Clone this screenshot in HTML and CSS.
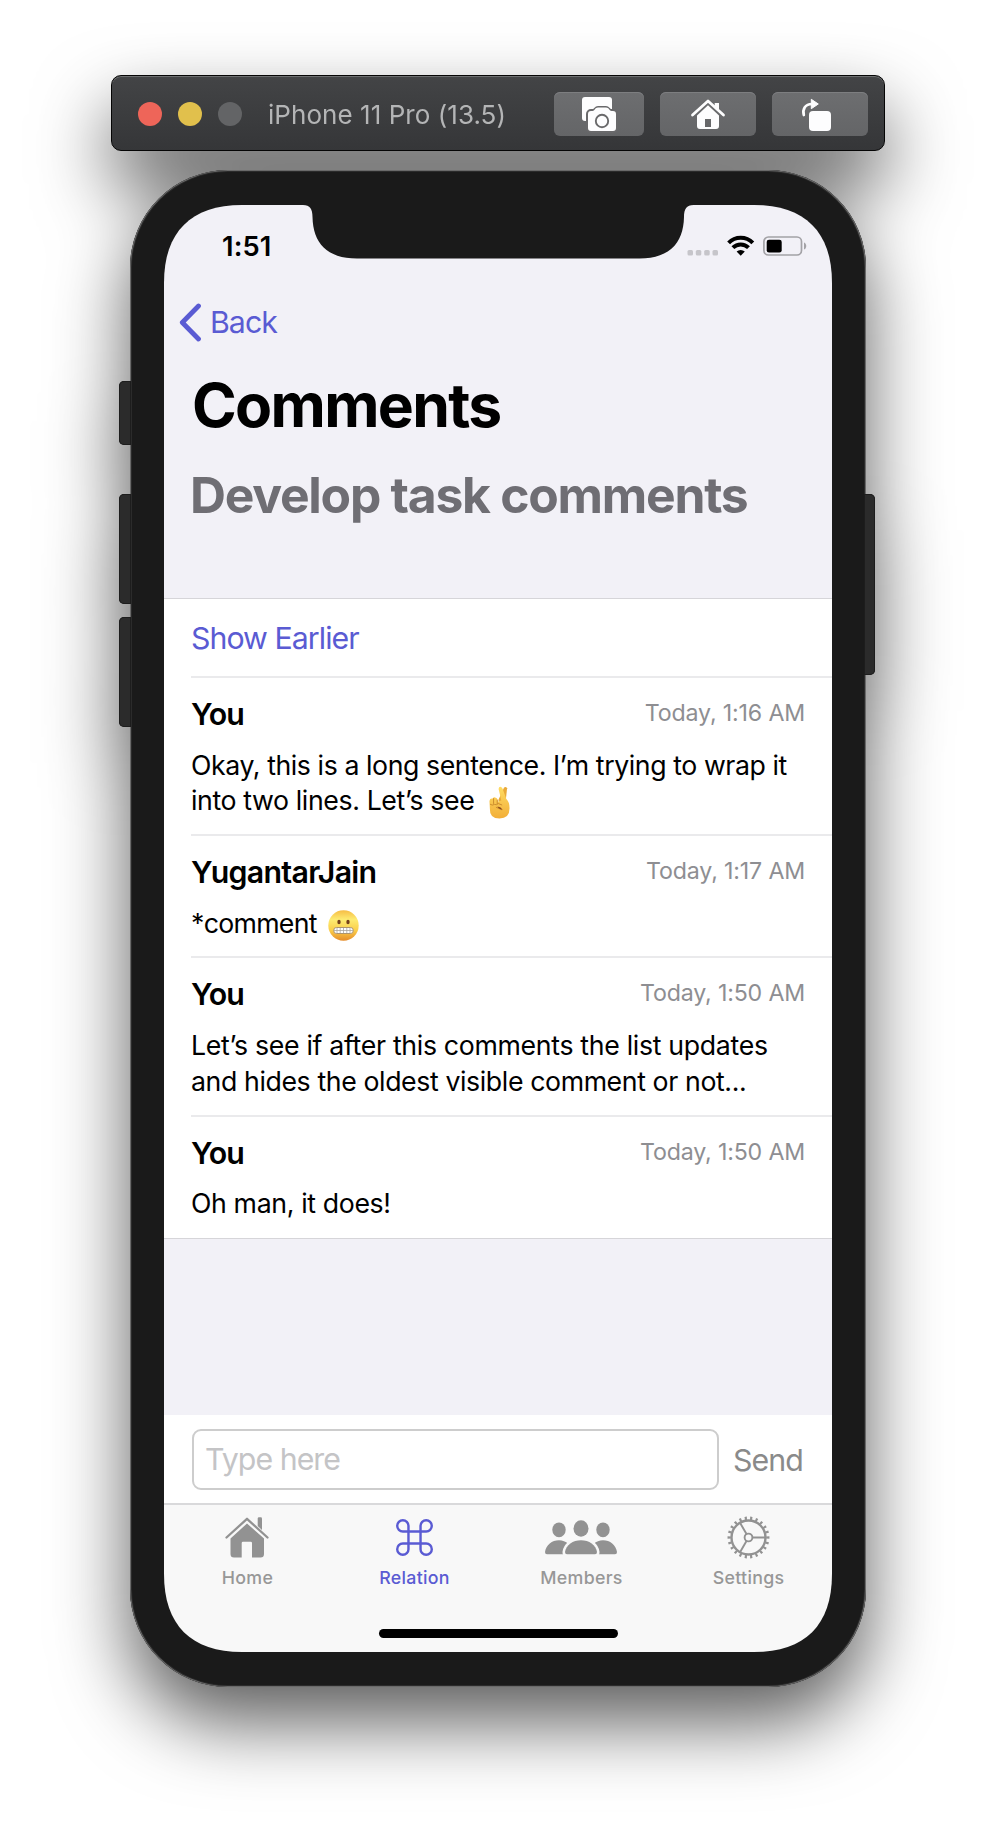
FILE: index.html
```html
<!DOCTYPE html>
<html lang="en">
<head>
<meta charset="utf-8">
<title>iPhone 11 Pro (13.5)</title>
<link rel="stylesheet" href="styles.css">
</head>
<body>
<div class="simulator">
  <header class="toolbar">
    <span class="light red"></span><span class="light yellow"></span><span class="light gray"></span>
    <span class="title"><span class="t-title">iPhone 11 Pro (13.5)</span></span>
    <div class="tools">
      <span class="tool narrow"><svg width="90" height="44" viewBox="0 0 90 44">
        <rect x="28" y="5" width="30" height="24" rx="3" fill="#fdfdfe"/>
        <path d="M37 19h2.500c1.500 0 2.500-3 4.500-3h8c2 0 3 3 4.500 3H59a3 3 0 0 1 3 3v14a3 3 0 0 1-3 3H37a3 3 0 0 1-3-3V22a3 3 0 0 1 3-3z" fill="#69696b" stroke="#69696b" stroke-width="4"/>
        <path d="M37 19h1.500c2 0 2.500-3.500 5.500-3.500h8c3 0 3.500 3.500 5.500 3.500H59a3 3 0 0 1 3 3v14a3 3 0 0 1-3 3H37a3 3 0 0 1-3-3V22a3 3 0 0 1 3-3z" fill="#fdfdfe"/>
        <circle cx="48" cy="29" r="6.200" fill="none" stroke="#69696b" stroke-width="1.900"/></svg></span>
      <span class="tool"><svg width="96" height="44" viewBox="0 0 96 44">
        <path d="M32.500 23 48 9l15.500 14" fill="none" stroke="#fdfdfe" stroke-width="2.800" stroke-linecap="round" stroke-linejoin="round"/>
        <path d="M54.700 11H59v8l-4.300-4z" fill="#fdfdfe"/>
        <path fill-rule="evenodd" d="M48 13.300 59 23.500V34a3 3 0 0 1-3 3H40a3 3 0 0 1-3-3V23.500zM45 27v8h6v-8z" fill="#fdfdfe"/></svg></span>
      <span class="tool"><svg width="96" height="44" viewBox="0 0 96 44">
        <rect x="37" y="19" width="22" height="20" rx="4" fill="#fdfdfe"/>
        <path d="M31.800 23c-1.500-6 1.500-11 8-11" fill="none" stroke="#fdfdfe" stroke-width="2.700" stroke-linecap="round"/>
        <path d="M39.300 7.300v9.400l7-4.700z" fill="#fdfdfe" stroke="#fdfdfe" stroke-linejoin="round"/></svg></span>
    </div>
  </header>

  <div class="phone">
    <i class="key mute"></i><i class="key vol-up"></i><i class="key vol-down"></i><i class="key power"></i>
    <main class="screen">
      <svg class="notch" width="668" height="56" viewBox="0 0 668 56"><path d="M139-1V0C146 0 148.500 4 148.500 12 149 38 163 53.500 193 53.500H475.500C505.500 53.500 519.500 38 520 12 520 4 522.500 0 529.500 0V-1z" fill="#1a1a1a"/></svg>
      <div class="status">
        <span class="t-clock">1:51</span>
        <svg width="121" height="22" viewBox="0 0 121 22">
          <g fill="#c6c5ca"><rect x="0.500" y="15" width="5.500" height="5.500" rx="1.500"/><rect x="8.800" y="15" width="5.500" height="5.500" rx="1.500"/><rect x="17.200" y="15" width="5.500" height="5.500" rx="1.500"/><rect x="25.500" y="15" width="5.500" height="5.500" rx="1.500"/></g>
          <g fill="none" stroke="#000" stroke-width="4"><path d="M41.600 7.800a17 17 0 0 1 24.200 0"/><path d="M45.900 12.700a11 11 0 0 1 15.600 0"/></g>
          <path d="M49.600 16.600a6 6 0 0 1 8.200 0L53.700 20.800z"/>
          <rect x="76.900" y="2" width="37.600" height="18" rx="4.500" fill="none" stroke="#a3a2a6" stroke-width="1.700"/>
          <rect x="79.700" y="4.700" width="15" height="12.800" rx="2.300"/>
          <path d="M117 7.500c3 1 3 6 0 7z" fill="#a3a2a6"/>
        </svg>
      </div>
      <nav class="nav">
        <svg width="23" height="39" viewBox="0 0 23 39"><path d="M19.500 3 3.300 19.500 19.500 36" fill="none" stroke="#5a5bd3" stroke-width="4.800" stroke-linecap="round" stroke-linejoin="round"/></svg>
        <span class="t-back">Back</span>
      </nav>
      <h1><span class="t-h1">Comments</span></h1>
      <h2><span class="t-h2">Develop task comments</span></h2>

      <section class="list">
        <div class="cell earlier"><span class="t-earlier">Show Earlier</span></div>
        <article class="cell">
          <div class="meta"><b class="t-you">You</b><time>Today, 1:16 AM</time></div>
          <p><span class="t-a1">Okay, this is a long sentence. I’m trying to wrap it</span><br><span class="t-a2">into two lines. Let’s see</span><svg class="hand" width="21" height="33" viewBox="0 0 23 34" preserveAspectRatio="none">
            <defs><linearGradient id="skin" x2="0" y2="1"><stop offset="0" stop-color="#ffdc62"/><stop offset="1" stop-color="#f2ae38"/></linearGradient></defs>
            <path d="M10 15 16.500 1.600q2-1.500 3.300.6L18 18z" fill="#e9a938"/>
            <path d="M13.500 15 10.500 3q.3-2.600 2.600-2 1.500.3 1.900 2L19 13.500q3.500 3 3.500 9.500 0 10.500-11 10.500T1 24L.5 15.500q.5-3 3.500-2.500 1.300-2 3.300-1 2 0 2.500 4z" fill="url(#skin)"/>
            <path d="M5 13v5M9 14.500v4M1.500 19q2 1.500 4.500 0 2.500 1 4-1l4 1.500M8 22l6 2.500" fill="none" stroke="#c98a2c" stroke-width="1" stroke-linecap="round"/>
            <path d="M9 21.500q3-1 6 3-3.500 0-6-3z" fill="#87451a"/></svg></p>
        </article>
        <article class="cell">
          <div class="meta"><b class="t-yj">YugantarJain</b><time>Today, 1:17 AM</time></div>
          <p><span class="t-b">*comment</span><svg class="face" width="31" height="31" viewBox="0 0 31 31">
            <defs><linearGradient id="face" x2="0" y2="1"><stop offset="0" stop-color="#f6bd45"/><stop offset=".3" stop-color="#fdeb72"/><stop offset=".65" stop-color="#fbcf4b"/><stop offset="1" stop-color="#e58c2a"/></linearGradient></defs>
            <circle cx="15.500" cy="15.500" r="15.200" fill="url(#face)"/>
            <ellipse cx="11" cy="12" rx="1.700" ry="2.300" fill="#75401b"/><ellipse cx="20" cy="12" rx="1.700" ry="2.300" fill="#75401b"/>
            <rect x="5.800" y="17.500" width="19.400" height="6" rx="2.600" fill="#fff" stroke="#a58b67" stroke-width=".9"/>
            <path d="M6 20.500h19M9 18v5M12.200 18v5M15.500 18v5M18.800 18v5M22 18v5" stroke="#aaa69f" stroke-width=".8"/></svg></p>
        </article>
        <article class="cell">
          <div class="meta"><b class="t-you">You</b><time>Today, 1:50 AM</time></div>
          <p><span class="t-c1">Let’s see if after this comments the list updates</span><br><span class="t-c2">and hides the oldest visible comment or not...</span></p>
        </article>
        <article class="cell">
          <div class="meta"><b class="t-you">You</b><time>Today, 1:50 AM</time></div>
          <p><span class="t-d">Oh man, it does!</span></p>
        </article>
      </section>

      <div class="composer">
        <div class="field"><span class="t-type">Type here</span></div>
        <span class="send"><span class="t-send">Send</span></span>
      </div>
      <footer class="tabs">
        <div class="tab"><div class="icon"><svg width="44" height="41" viewBox="0 0 44 41">
          <path d="M1.500 20.500 22 1.800l20.500 18.700" fill="none" stroke="#929292" stroke-width="2.300" stroke-linecap="round" stroke-linejoin="round"/>
          <path d="M32.700 9V1.500Q32.700.3 34 .3h1.700Q37 .3 37 1.500V13z"/>
          <path d="M22 6.500 39 21.500V37q0 3.500-3.500 3.500H27V26q0-1.300-1.300-1.300H18q-1.300 0-1.300 1.300v14.500H9Q5.500 40.500 5.500 37V21.500z"/></svg></div><span>Home</span></div>
        <div class="tab active"><div class="icon"><svg width="37" height="37" viewBox="0 0 36.800 36.800"><path d="M24.400 6.800a5.600 5.600 0 1 1 5.600 5.600H6.800a5.600 5.600 0 1 1 5.600-5.600V30a5.600 5.600 0 1 1-5.600-5.600H30a5.600 5.600 0 1 1-5.600 5.600z" fill="none" stroke="#5a5bd3" stroke-width="2.400"/></svg></div><span>Relation</span></div>
        <div class="tab"><div class="icon"><svg width="72" height="35" viewBox="0 0 72 35">
          <ellipse cx="14" cy="9.800" rx="6.700" ry="7.400"/><ellipse cx="58" cy="9.800" rx="6.700" ry="7.400"/><ellipse cx="36" cy="8.500" rx="7.500" ry="8.300"/>
          <path d="M0 32C1 25 7 20.300 14 20.300S27 25 28 34.300H2Q0 34.300 0 32zM72 32C71 25 65 20.300 58 20.300S45 25 44 34.300H70Q72 34.300 72 32z"/>
          <path d="M20 32C21 25 28 20.300 36 20.300S51 25 52 32Q52 34.300 50 34.300H22Q20 34.300 20 32z" stroke="#f8f8f8" stroke-width="5"/>
          <path d="M20 32C21 25 28 20.300 36 20.300S51 25 52 32Q52 34.300 50 34.300H22Q20 34.300 20 32z"/></svg></div><span>Members</span></div>
        <div class="tab"><div class="icon"><svg width="43" height="43" viewBox="-21.500 -21.500 43 43"><g fill="none" stroke="#929292">
          <circle r="17" stroke-width="2.400"/><circle r="3.900" stroke-width="1.900"/><circle r="19.300" stroke-width="3.300" pathLength="66" stroke-dasharray="1.200 1.800" stroke-dashoffset=".6"/>
          <path d="M4 0H17M-2 3.500-8.500 14.700M-2-3.500-8.500-14.700" stroke-width="1.900"/></g></svg></div><span>Settings</span></div>
        <i class="indicator"></i>
      </footer>
    </main>
  </div>
</div>
</body>
</html>
```
FILE: styles.css
```css
* { box-sizing: border-box; }
body { margin: 0; width: 996px; height: 1836px; overflow: hidden; background: #fff; font-family: Inter, "Liberation Sans", sans-serif; color: #000; }
svg { display: block; flex: none; }
span, b, time { white-space: nowrap; }
.simulator { height: 1836px; padding-top: 75px; display: flex; flex-direction: column; align-items: center; filter: drop-shadow(0 36px 37px rgba(0, 0, 0, .63)); }

.toolbar { width: 774px; height: 76px; padding: 2px 16px 0 26px; display: flex; align-items: center; gap: 16px; border: 1px solid #050505; border-radius: 10px; background: linear-gradient(#434446, #353638); box-shadow: inset 0 1px #6d6f70; }
.light { width: 24px; height: 24px; border-radius: 50%; }
.red { background: #ee6559; }
.yellow { background: #e1c04c; }
.gray { background: #636466; }
.title { margin-left: 10px; padding-top: 2px; flex: 1; font-size: 26px; line-height: 34px; color: #b4b5b6; }
.tools { display: flex; gap: 16px; }
.tool { width: 96px; height: 44px; border-radius: 6px; background: linear-gradient(#6d6e70, #646567); box-shadow: inset 0 1px #7d7e80; }
.narrow { width: 90px; }

.phone { position: relative; width: 736px; height: 1517px; margin-top: 19px; padding: 35px 34px; border-radius: 98px; background: #1a1a1a; box-shadow: inset 0 0 0 1px #6a6a6a, inset 0 0 0 2px #2b2b2b; }
.key { position: absolute; z-index: 1; left: -11px; width: 12px; border-radius: 5px 0 0 5px; background: #2b2b2b; box-shadow: inset 0 0 0 1px #1d1d1d; }
.mute { top: 211px; height: 64px; }
.vol-up { top: 324px; height: 110px; }
.vol-down { top: 447px; height: 110px; }
.power { top: 324px; height: 181px; left: 734px; width: 11px; border-radius: 0 5px 5px 0; }

.screen { position: relative; width: 668px; height: 1447px; display: flex; flex-direction: column; background: #f2f1f7; clip-path: path("M0 78C0 27 27 0 78 0H590C641 0 668 27 668 78V1369C668 1420 641 1447 590 1447H78C27 1447 0 1420 0 1369Z"); }
.notch { position: absolute; top: 0; left: 0; }
.status { height: 81px; padding: 0 24px 0 58px; display: flex; align-items: center; justify-content: space-between; font-size: 26.700px; font-weight: 600; }
.nav { height: 72px; padding: 0 0 0 15px; display: flex; align-items: center; gap: 8px; font-size: 30.300px; line-height: 73px; color: #5a5bd3; }
h1, h2, p { margin: 0; }
h1 { height: 92px; padding: 1px 0 0 28px; font-size: 60.600px; line-height: 92px; font-weight: 700; }
h2 { height: 148px; padding: 1px 0 0 26px; font-size: 49.800px; line-height: 88px; font-weight: 700; color: #6f6e74; }

.list { background: #fff; border-top: 1px solid #d6d5d9; border-bottom: 1px solid #d6d5d9; }
.cell { margin-left: 27px; padding: 16px 27px 15.200px 0; border-bottom: 2px solid #eaeaec; }
.cell:last-child { border-bottom: 0; padding-bottom: 16px; }
.earlier { height: 79px; padding: 0; font-size: 30.300px; line-height: 78px; color: #5a5bd3; }
.meta { height: 40px; margin-bottom: 13.500px; display: flex; justify-content: space-between; font-size: 30.300px; line-height: 40px; }
.meta b { font-weight: 600; }
time { font-size: 23.200px; line-height: 39.500px; letter-spacing: -.17px; color: #8e8e92; }
p { font-size: 26.700px; line-height: 35.700px; }
p svg { display: inline-block; }
.hand { margin: -8px 0 -8px 15px; vertical-align: -7px; }
.face { margin: -8px 0 -8px 11px; vertical-align: -6px; }
.hand, .face { transform: translateY(-6px); }

.composer { height: 88px; margin-top: auto; padding: 14px 28px 0 28px; display: flex; gap: 14px; background: #fff; font-size: 30.300px; }
.field { width: 527px; height: 61px; padding-left: 11px; border: 2px solid #cdcdcd; border-radius: 9px; line-height: 56px; color: #c4c4c6; }
.send { line-height: 63px; color: #8a8a8a; }
.tabs { position: relative; height: 149px; padding-top: 6px; display: flex; background: #f8f8f8; border-top: 2px solid #d9d9db; }
.tab { width: 167px; display: flex; flex-direction: column; align-items: center; font-size: 17.800px; line-height: 25px; font-weight: 500; letter-spacing: .3px; color: #979797; fill: #929292; }
.tab svg { margin: 0 1px 1px 0; }
.active { color: #5a5bd3; }
.icon { height: 54px; display: flex; align-items: center; }
.indicator { position: absolute; left: 215px; bottom: 14px; width: 239px; height: 9px; border-radius: 5px; background: #000; }

.t-title { letter-spacing: .05px; }
.t-clock { padding-top: 2px; letter-spacing: .1px; font-size: 27.300px; }
.t-h1 { letter-spacing: -1.700px; }
.t-h2 { letter-spacing: -1.250px; }
.t-back, .t-earlier, .t-type, .t-send, .t-you { letter-spacing: -.95px; }
.t-yj { letter-spacing: -.7px; }
.t-a1 { letter-spacing: -.42px; }
.t-a2 { letter-spacing: -.38px; }
.t-b { letter-spacing: -.7px; }
.t-c1 { letter-spacing: -.32px; }
.t-c2 { letter-spacing: -.39px; }
.t-d { letter-spacing: -.36px; }
```
